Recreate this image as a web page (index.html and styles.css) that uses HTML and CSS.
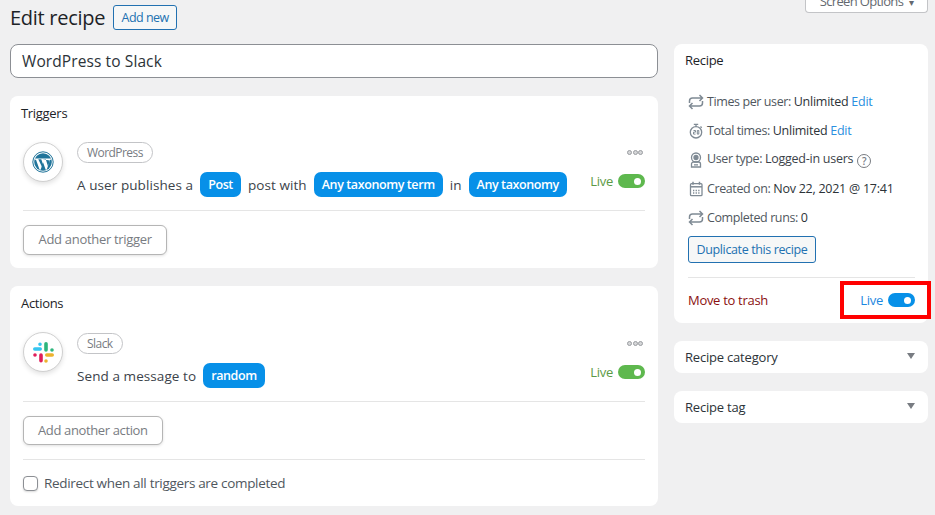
FILE: index.html
```html
<!DOCTYPE html>
<html lang="en">
<head>
<meta charset="utf-8">
<title>Edit recipe</title>
<link rel="stylesheet" href="styles.css">
</head>
<body>
<svg class="defs" width="0" height="0" aria-hidden="true">
  <symbol id="i-repeat" viewBox="0 0 16 16"><path d="M1.500 9V7a3 3 0 0 1 3-3H14M11.500 1l3 3-3 3M14.500 7v2a3 3 0 0 1-3 3H2M4.500 9l-3 3 3 3" fill="none" stroke="#7f8a94" stroke-width="1.500"/></symbol>
</svg>
<div class="screen-row"><button class="screen-options">Screen Options <span class="caret">▾</span></button></div>
<div class="layout">
  <div class="main">
    <header class="page-head">
      <h1>Edit recipe</h1>
      <a class="add-new">Add new</a>
    </header>
    <div class="title-input">WordPress to Slack</div>

    <section class="panel triggers">
      <h2>Triggers</h2>
      <div class="item">
        <div class="logo">
          <svg width="32" height="32" viewBox="0 0 32 32"><circle cx="16" cy="16" r="10.200" fill="none" stroke="#21759b" stroke-width="1"/><circle cx="16" cy="16" r="8.800" fill="#21759b"/><path d="M7.500 12.500h17v1.200h-1.400l-3.400 10h-1l-2.600-7.200-2.500 7.200h-1l-3.600-10H7.500z" fill="#fff"/><path d="M11.300 13.200h3l2.600 7.700-.8 2.300zM15.600 13.200h3.200l2.200 7.400 1.800-6" fill="#21759b"/></svg>
        </div>
        <div class="item-body">
          <span class="tag">WordPress</span>
          <div class="sentence"><span>A user publishes a</span><b class="pill">Post</b><span>post with</span><b class="pill">Any taxonomy term</b><span>in</span><b class="pill">Any taxonomy</b></div>
        </div>
        <div class="item-side">
          <div class="dots"><i></i><i></i><i></i></div>
          <div class="live"><span>Live</span><span class="toggle"></span></div>
        </div>
      </div>
      <hr>
      <button class="ghost">Add another trigger</button>
    </section>

    <section class="panel actions">
      <h2>Actions</h2>
      <div class="item">
        <div class="logo">
          <svg width="21" height="21" viewBox="0 0 21 21" fill="none" stroke-width="3.600" stroke-linecap="round">
            <path d="M1.800 7h5.400M7 2.200v.01" stroke="#36c5f0"/>
            <path d="M13 1.800V8M19 8v.01" stroke="#2eb67d"/>
            <path d="M13.800 13h5.400M13 19v.01" stroke="#ecb22e"/>
            <path d="M8 13v5.800M2 13v.01" stroke="#e01e5a"/>
          </svg>
        </div>
        <div class="item-body">
          <span class="tag">Slack</span>
          <div class="sentence"><span>Send a message to</span><b class="pill">random</b></div>
        </div>
        <div class="item-side">
          <div class="dots"><i></i><i></i><i></i></div>
          <div class="live"><span>Live</span><span class="toggle"></span></div>
        </div>
      </div>
      <hr>
      <button class="ghost">Add another action</button>
      <hr class="second">
      <label class="check"><span class="box"></span>Redirect when all triggers are completed</label>
    </section>
  </div>

  <aside class="side">
    <section class="card recipe">
      <h2>Recipe</h2>
      <ul class="meta">
        <li><svg class="mi" width="16" height="16"><use href="#i-repeat"/></svg><span class="line">Times per user: <strong>Unlimited</strong> <a>Edit</a></span></li>
        <li><svg class="mi" width="16" height="16" viewBox="0 0 16 16"><g fill="none" stroke="#7f8a94" stroke-width="1.300"><circle cx="8" cy="9.300" r="5.700"/><path d="M5.800 1.300h4.400M8 1.300v2.300M12.500 3.500l1.200 1.200"/><path d="M5.500 7.500h2v1.600h-2v2h2M9.300 7.500h1.500v3.600H9.300z" stroke-width="1"/></g></svg><span class="line">Total times: <strong>Unlimited</strong> <a>Edit</a></span></li>
        <li><svg class="mi" width="16" height="16" viewBox="0 0 16 16"><g fill="none" stroke="#7f8a94" stroke-width="1.300"><circle cx="8" cy="5.500" r="4.500"/><circle cx="8" cy="5.500" r="2" fill="#7f8a94"/><path d="M3.500 15v-3a2 2 0 0 1 2-2h5a2 2 0 0 1 2 2v3zM6 12.800h4"/></g></svg><span class="line">User type: <strong class="reg">Logged-in users</strong> <span class="help">?</span></span></li>
        <li><svg class="mi" width="16" height="16" viewBox="0 0 16 16"><g fill="none" stroke="#7f8a94"><rect x="2.500" y="2.700" width="11.500" height="12" rx="1" stroke-width="1.300"/><path d="M5 .8v3M11.500 .8v3" stroke-width="1.500"/><path d="M2.500 5.800h11.500" stroke-width="1.500"/><path d="M5 9.500h1.300M7.600 9.500h1.300M10.200 9.500h1.300M5 12h1.300M7.600 12h1.300M10.200 12h1.300" stroke-width="1.400"/></g></svg><span class="line">Created on: <strong>Nov 22, 2021 @ 17:41</strong></span></li>
        <li><svg class="mi" width="16" height="16"><use href="#i-repeat"/></svg><span class="line">Completed runs: <strong>0</strong></span></li>
      </ul>
      <button class="duplicate">Duplicate this recipe</button>
      <hr>
      <div class="foot">
        <a class="trash">Move to trash</a>
        <div class="live blue"><span>Live</span><span class="toggle"></span></div>
      </div>
      <div class="highlight"></div>
    </section>
    <section class="card fold"><h3>Recipe category</h3><span class="arrow"></span></section>
    <section class="card fold"><h3>Recipe tag</h3><span class="arrow"></span></section>
  </aside>
</div>
</body>
</html>
```
FILE: styles.css
```css
* { box-sizing: border-box; }
html, body { margin: 0; height: 515px; overflow: hidden; }
body {
  background: #f0f0f1;
  color: #3c434a;
  font-family: "Open Sans", "Noto Sans", "Liberation Sans", sans-serif;
  font-size: 13px;
  position: relative;
}
.defs { position: absolute; }
.screen-row { height: 0; display: flex; justify-content: flex-end; padding-right: 7px; }
.screen-options {
  height: 28px; width: 123px; margin-top: -15px; flex: none;
  background: #fff; border: 1px solid #c3c4c7; border-top: 0; border-radius: 0 0 4px 4px;
  color: #646970; font: 13px "Open Sans", sans-serif; letter-spacing: -.65px; display: block;
  padding: 5px 0 0;
}
.caret { font-size: 10px; margin-left: 3px; }
.layout { display: grid; grid-template-columns: 648px 254px; gap: 16px; padding: 0 0 0 10px; }
.main { display: flex; flex-direction: column; }
.page-head { display: flex; align-items: center; height: 44px; padding-bottom: 9px; }
h1 { margin: 0; font-size: 20px; font-weight: 400; color: #1d2327; line-height: 36px; letter-spacing: -.28px; }
.add-new {
  margin-left: 8px; width: 64px; height: 25px; border: 1px solid #2271b1; border-radius: 3px;
  background: #f6f7f7; color: #2271b1; font-size: 12.500px; font-weight: 500; letter-spacing: -.5px;
  display: flex; align-items: center; justify-content: center;
}
.title-input {
  height: 34px; background: #fff; border: 1px solid #8c8f94; border-radius: 8px;
  color: #2c3338; padding: 0 11px; font-size: 15.500px; font-weight: 500; line-height: 32px; letter-spacing: .1px;
}
.panel { background: #fff; border-radius: 8px; padding: 0 13px; }
.triggers { margin-top: 18px; height: 172px; }
.actions { margin-top: 18px; height: 220px; }
h2 { margin: 0; font-size: 13px; font-weight: 500; color: #1d2327; letter-spacing: -.3px; line-height: 18px; }
.panel h2 { padding-top: 8px; margin-left: -2px; line-height: 18px; }
.item { display: flex; position: relative; height: 68px; margin-top: 20px; }
.actions .item { height: 69px; }
.logo {
  width: 40px; height: 40px; border-radius: 50%; background: #fff; border: 1px solid #d0d0d0;
  box-shadow: 0 2px 5px rgba(0,0,0,.12); display: flex; align-items: center; justify-content: center; flex: none;
}
.item-body { margin-left: 14px; flex: 1; min-width: 0; }
.actions .item-body { padding-top: 1px; }
.tag {
  display: block; width: fit-content; height: 21px; line-height: 20px; padding: 0 9px; border: 1px solid #c3c4c7; border-radius: 11px;
  color: #787c82; font-size: 12px; font-weight: 500; letter-spacing: -.55px; background: #fff;
}
.sentence { display: flex; align-items: center; gap: 7px; margin-top: 9px; color: #3c434a; font-size: 13.500px; letter-spacing: .08px; }
.pill {
  display: block; height: 25px; line-height: 26px; padding: 0 8px; background: #0790e8; color: #fff;
  border-radius: 7px; font-size: 12.500px; font-weight: 600; letter-spacing: -.4px;
}
.item-side { position: absolute; right: 0; top: 0; display: flex; flex-direction: column; align-items: flex-end; }
.actions .item-side { padding-top: 1px; }
.dots { display: flex; gap: .5px; margin-top: 8px; margin-right: 2px; }
.dots i { width: 5px; height: 5px; border-radius: 50%; background: #d5d6d8; border: 1.500px solid #9a9da1; }
.live { display: flex; align-items: center; gap: 5px; color: #5b9a45; font-weight: 500; font-size: 13px; letter-spacing: -.25px; line-height: 18px; }
.item-side .live { margin-top: 17px; }
.toggle { width: 27px; height: 14px; border-radius: 7px; background: #5eb84e; position: relative; display: block; }
.toggle::after { content: ""; position: absolute; right: 4px; top: 3.500px; width: 7px; height: 7px; border-radius: 50%; background: #fff; }
.panel hr { border: 0; border-top: 1px solid #e5e5e5; margin: 0; }
.ghost {
  display: block; background: #fff; border: 1px solid #b5b5b5; border-radius: 6px; color: #787c82; height: 30px; padding: 0 14.500px 2px;
  margin-top: 14px; font: 500 13px "Open Sans", sans-serif; letter-spacing: -.3px; box-shadow: 0 1px 3px rgba(0,0,0,.12);
}
.actions .ghost { height: 29px; padding: 0 14px 2px; letter-spacing: -.37px; }
.panel .second { margin-top: 14px; }
.check { display: flex; align-items: center; gap: 6px; margin-top: 14px; font-size: 13.500px; line-height: 18px; color: #50575e; letter-spacing: -.32px; }
.box { width: 15px; height: 15px; border: 1px solid #8c8f94; border-radius: 4px; background: #fff; box-shadow: 0 1px 2px rgba(0,0,0,.15); flex: none; }
.side { display: flex; flex-direction: column; gap: 18px; padding-top: 44px; }
.card { background: #fff; border-radius: 8px; padding: 0 11px; position: relative; }
.recipe { height: 279px; padding: 7px 11px 0; }
.meta { list-style: none; margin: 18px 0 0 3px; padding: 0; }
.meta li { display: flex; align-items: center; height: 29.200px; white-space: nowrap; color: #50575e; font-size: 12.500px; letter-spacing: -.4px; }
.mi { margin-right: 3px; flex: none; width: 16px; }
.line { display: block; margin-top: -1px; }
.meta strong { color: #2c3338; font-weight: 500; letter-spacing: -.25px; }
.meta strong.reg { color: #3c434a; }
.meta a { color: #2b8fe0; font-weight: 500; letter-spacing: -.25px; }
.help { width: 14px; height: 14px; border: 1px solid #787c82; border-radius: 50%; color: #787c82; font-size: 10px; line-height: 12px; text-align: center; display: inline-block; font-weight: 600; vertical-align: -2px; letter-spacing: 0; margin-left: 1px; }
.duplicate {
  display: block; margin: 3px 0 0 3px; width: 128px; height: 27px; border: 1px solid #2271b1; border-radius: 3px; background: #f6f7f7; color: #2271b1;
  font: 500 12.500px "Open Sans", sans-serif; letter-spacing: -.38px; padding: 0;
}
.recipe hr { border: 0; border-top: 1px solid #e5e5e5; margin: 14px 2px 0 3px; }
.foot { display: flex; justify-content: space-between; align-items: center; height: 45px; margin-left: 3px; padding-right: 2px; }
.trash { color: #8a1010; font-weight: 500; letter-spacing: -.3px; }
.live.blue { color: #1b87e0; font-size: 13px; }
.live.blue .toggle { background: #0790e8; }
.highlight { position: absolute; left: 166px; top: 237px; width: 91px; height: 38px; border: 4px solid #f00; pointer-events: none; }
.fold { height: 32px; display: flex; align-items: center; justify-content: space-between; padding-right: 11px; }
h3 { margin: 0; font-size: 13px; font-weight: 500; color: #2c3338; letter-spacing: -.2px; }
.arrow { width: 0; height: 0; border-left: 4px solid transparent; border-right: 4px solid transparent; border-top: 6px solid #787c82; margin-top: -3px; margin-right: 2px; }
```
